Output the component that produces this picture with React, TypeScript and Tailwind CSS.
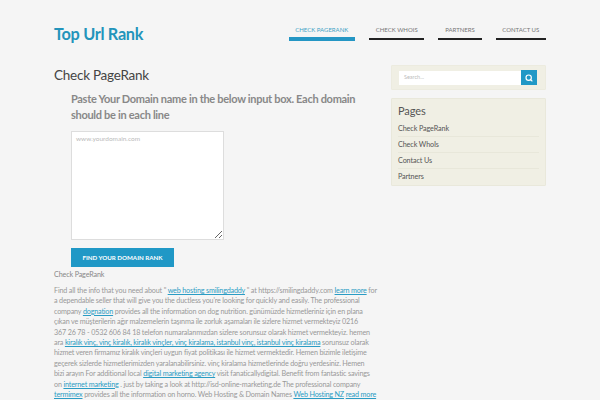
import { Search } from "lucide-react";

const navItems = [
  { label: "CHECK PAGERANK", active: true },
  { label: "CHECK WHOIS", active: false },
  { label: "PARTNERS", active: false },
  { label: "CONTACT US", active: false },
];

const pages = ["Check PageRank", "Check WhoIs", "Contact Us", "Partners"];

const A = ({ children }: { children: React.ReactNode }) => (
  <a href="#" className="text-[#2b9cc4] underline">
    {children}
  </a>
);

const App = () => {
  return (
    <div className="h-[400px] w-[600px] overflow-hidden bg-[#f5f5f5] font-['Lato',sans-serif]">
      <div className="mx-[54px]">
        <header className="flex h-[64px] items-start justify-between">
          <h1 className="mt-[22px] text-[16.3px] font-bold leading-[23px] tracking-[-0.3px] text-[#2394bb]">
            Top Url Rank
          </h1>
          <nav className="mt-[25px] flex gap-[14px]">
            {navItems.map((item) => (
              <a
                key={item.label}
                href="#"
                className={
                  item.active
                    ? "h-[16px] border-b-[4px] border-[#2496c4] px-[6.75px] text-[6px] leading-[10px] text-[#3ea3c6]"
                    : "h-[15px] border-b-[2px] border-[#222222] px-[6.75px] text-[6px] leading-[10px] text-[#777777]"
                }
              >
                {item.label}
              </a>
            ))}
          </nav>
        </header>
        <div className="flex justify-between">
          <main className="w-[322px]">
            <h2 className="mt-[1px] text-[13.5px] leading-[20px] tracking-[-0.25px] text-[#444444]">Check PageRank</h2>
            <div className="ml-[17px] w-[305px]">
              <p className="mt-[6px] text-[11px] font-bold leading-[16px] tracking-[-0.3px] text-[#888888]">
                Paste Your Domain name in the below input box. Each domain should be in each line
              </p>
              <textarea
                placeholder="www.yourdomain.com"
                className="mt-[8px] block h-[109px] w-[153px] border border-[#dddddd] bg-white px-[4px] py-[2px] text-[6.5px] placeholder:text-[#bbbbbb]"
              />
              <button className="mt-[8px] flex h-[19px] w-[103px] items-center justify-center bg-[#2098c6] text-[6.2px] font-bold text-white">
                FIND YOUR DOMAIN RANK
              </button>
            </div>
            <div className="mt-[2px] text-[7.2px] leading-[11px] tracking-[-0.15px] text-[#888888]">Check PageRank</div>
            <p className="mt-[6px] whitespace-nowrap text-[7.2px] leading-[10.4px] tracking-[-0.17px] text-[#999999]">
              Find all the info that you need about " <A>web hosting smilingdaddy</A> " at https://smilingdaddy.com <A>learn more</A> for
              <br />
              a dependable seller that will give you the ductless you're looking for quickly and easily. The professional
              <br />
              company <A>dognation</A> provides all the information on dog nutrition. günümüzde hizmetleriniz için en plana
              <br />
              çıkan ve müşterilerin ağır malzemelerin taşınma ile zorluk aşamaları ile sizlere hizmet vermekteyiz 0216
              <br />
              367 26 78 - 0532 606 84 18 telefon numaralarımızdan sizlere sorunsuz olarak hizmet vermekteyiz. hemen
              <br />
              ara <A>kiralık vinç, vinç kiralık, kiralık vinçler, vinç kiralama, istanbul vinç, istanbul vinç kiralama</A> sorunsuz olarak
              <br />
              hizmet veren firmamız kiralık vinçleri uygun fiyat politikası ile hizmet vermektedir. Hemen bizimle iletişime
              <br />
              geçerek sizlerde hizmetlerimizden yaralanabilirsiniz. vinç kiralama hizmetlerinde doğru yerdesiniz. Hemen
              <br />
              bizi arayın For additional local <A>digital marketing agency</A> visit fanaticallydigital. Benefit from fantastic savings
              <br />
              on <A>internet marketing</A> . just by taking a look at http://isd-online-marketing.de The professional company
              <br />
              <A>termimex</A> provides all the information on horno. Web Hosting &amp; Domain Names <A>Web Hosting NZ</A> <A>read more</A>
            </p>
          </main>
          <aside className="mt-[1px] w-[155px]">
            <div className="flex h-[25px] items-center rounded-[1px] border border-[#ecebdf] bg-[#f0efe4] pl-[7px] pr-[8px]">
              <div className="flex h-[14px] flex-1 items-center bg-white pl-[5px] text-[5.5px] text-[#bbbbbb]">
                Search...
              </div>
              <div className="flex h-[15px] w-[16px] items-center justify-center bg-[#2098c6]">
                <Search className="h-[8px] w-[8px] text-white" strokeWidth={3.5} />
              </div>
            </div>
            <div className="mt-[8px] h-[88px] rounded-[1px] border border-[#e9e8db] bg-[#f0efe4] px-[6px] pt-[4px]">
              <h3 className="text-[11px] leading-[16px] tracking-[-0.1px] text-[#555555]">Pages</h3>
              <ul className="mt-[2px]">
                {pages.map((page, index) => (
                  <li
                    key={page}
                    className={
                      index < pages.length - 1
                        ? "h-[16px] border-b border-[#e8e7da] text-[7.2px] leading-[16px] tracking-[-0.1px] text-[#555555]"
                        : "h-[16px] text-[7.2px] leading-[16px] tracking-[-0.1px] text-[#555555]"
                    }
                  >
                    {page}
                  </li>
                ))}
              </ul>
            </div>
          </aside>
        </div>
      </div>
    </div>
  );
};

export default App;
